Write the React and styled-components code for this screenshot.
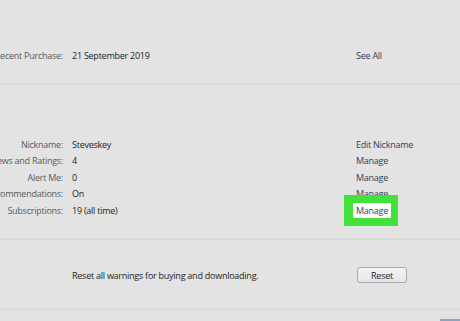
import React from 'react';
import styled, { createGlobalStyle } from 'styled-components';

const GlobalStyle = createGlobalStyle`
  html, body {
    margin: 0;
    padding: 0;
    background: #e3e3e3;
    overflow: hidden;
  }
  body {
    font-family: "Open Sans", "Noto Sans", sans-serif;
    font-size: 9px;
    letter-spacing: -0.25px;
  }
`;

const Page = styled.div`
  width: 460px;
  height: 321px;
  background: #e3e3e3;
  display: flex;
  flex-direction: column;
  position: relative;
  overflow: hidden;
`;

const Section = styled.div`
  height: ${(p) => p.h}px;
  padding-top: ${(p) => p.top}px;
  box-sizing: border-box;
  border-bottom: 2px solid #dadada;
  display: flex;
  flex-direction: column;
`;

const Row = styled.div`
  display: grid;
  grid-template-columns: 63px 275px 1fr;
  column-gap: 9px;
  height: 16.5px;
  align-items: center;
  white-space: nowrap;
`;

const Label = styled.div`
  display: flex;
  justify-content: flex-end;
  color: #5a5a5a;
`;

const Value = styled.div`
  color: #1e1e1e;
`;

const LinkCell = styled.div`
  position: relative;
  color: #2e3f5e;
`;

const Highlight = styled.div`
  position: absolute;
  left: -12px;
  top: 50%;
  margin-top: -15px;
  width: 54px;
  height: 31px;
  background: #41e33b;
`;

const LinkText = styled.span`
  position: relative;
  ${(p) =>
    p.marked &&
    `
    background: #fff;
    padding: 1px 3px;
    margin-left: -3px;
  `}
`;

const ResetRow = styled.div`
  display: flex;
  align-items: center;
  padding-left: 72px;
  height: 16px;
  white-space: nowrap;
  color: #1e1e1e;
`;

const ResetButton = styled.button`
  margin-left: auto;
  margin-right: 53px;
  width: 50px;
  height: 16px;
  padding: 0;
  border: 1px solid #a9a9a9;
  border-radius: 3px;
  background: linear-gradient(#f4f4f4, #e6e6e6);
  font-family: inherit;
  font-size: 9px;
  letter-spacing: -0.25px;
  color: #1e1e1e;
`;

const Corner = styled.div`
  position: absolute;
  right: 0;
  bottom: 0;
  width: 20px;
  height: 2px;
  background: #8fa3bd;
`;

const rows = [
  { label: 'Nickname:', value: 'Steveskey', link: 'Edit Nickname' },
  { label: 'Reviews and Ratings:', value: '4', link: 'Manage' },
  { label: 'Alert Me:', value: '0', link: 'Manage' },
  { label: 'Recommendations:', value: 'On', link: 'Manage' },
  { label: 'Subscriptions:', value: '19 (all time)', link: 'Manage', marked: true },
];

export default function App() {
  return (
    <Page>
      <GlobalStyle />
      <Section h={85} top={47}>
        <Row>
          <Label>Recent Purchase:</Label>
          <Value>21 September 2019</Value>
          <LinkCell>See All</LinkCell>
        </Row>
      </Section>
      <Section h={155} top={51}>
        {rows.map((r) => (
          <Row key={r.label}>
            <Label>{r.label}</Label>
            <Value>{r.value}</Value>
            <LinkCell>
              {r.marked && <Highlight />}
              <LinkText marked={r.marked}>{r.link}</LinkText>
            </LinkCell>
          </Row>
        ))}
      </Section>
      <Section h={70} top={27}>
        <ResetRow>
          Reset all warnings for buying and downloading.
          <ResetButton>Reset</ResetButton>
        </ResetRow>
      </Section>
      <Corner />
    </Page>
  );
}
